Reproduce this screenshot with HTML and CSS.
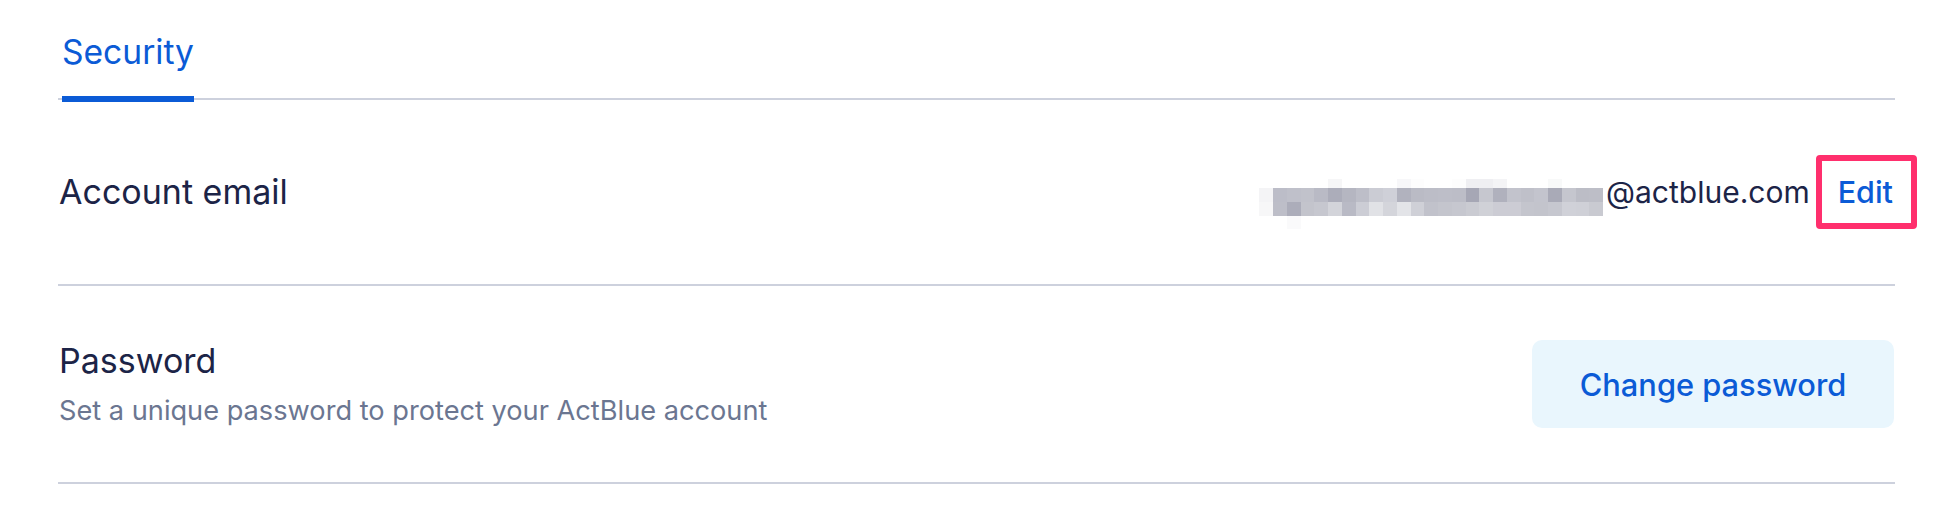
FILE: index.html
```html
<!DOCTYPE html>
<html lang="en">
<head>
<meta charset="utf-8">
<title>Security</title>
<link rel="stylesheet" href="styles.css">
</head>
<body>
<main class="page">
  <nav class="tabs">
    <a class="tab tab-active" href="#">Security</a>
  </nav>

  <section class="row row-email">
    <div class="row-title">Account email</div>
    <div class="row-actions">
      <span class="email">
        <span class="mosaic" aria-hidden="true">
          <i style="background:#fff"></i><i style="background:#fff"></i><i style="background:#fff"></i><i style="background:#fff"></i><i style="background:#fff"></i><i style="background:#f6f6f7"></i><i style="background:#fff"></i><i style="background:#fff"></i><i style="background:#fff"></i><i style="background:#fff"></i><i style="background:#f7f7f9"></i><i style="background:#fdfdfd"></i><i style="background:#fff"></i><i style="background:#fff"></i><i style="background:#fdfdfd"></i><i style="background:#efeff2"></i><i style="background:#efeff2"></i><i style="background:#f4f4f6"></i><i style="background:#fff"></i><i style="background:#fff"></i><i style="background:#fff"></i><i style="background:#f8f9f9"></i><i style="background:#fff"></i><i style="background:#fff"></i><i style="background:#fff"></i>
          <i style="background:#f4f4f6"></i><i style="background:#bcbdc8"></i><i style="background:#bfc0ca"></i><i style="background:#c1c2cb"></i><i style="background:#b9bac5"></i><i style="background:#acadba"></i><i style="background:#b5b6c1"></i><i style="background:#bdbec8"></i><i style="background:#cbccd4"></i><i style="background:#cfd0d8"></i><i style="background:#b1b2be"></i><i style="background:#babbc5"></i><i style="background:#bcbdc7"></i><i style="background:#bdbec8"></i><i style="background:#bcbdc7"></i><i style="background:#a6a7b5"></i><i style="background:#c6c7cf"></i><i style="background:#b0b1bd"></i><i style="background:#c2c3cc"></i><i style="background:#bfc0c9"></i><i style="background:#c3c4cd"></i><i style="background:#a9aab7"></i><i style="background:#c5c6ce"></i><i style="background:#bcbdc6"></i><i style="background:#bdbec7"></i>
          <i style="background:#f7f7f8"></i><i style="background:#bdbec8"></i><i style="background:#acadba"></i><i style="background:#c3c4cc"></i><i style="background:#c6c7cf"></i><i style="background:#d3d4da"></i><i style="background:#b9bac5"></i><i style="background:#cccdd5"></i><i style="background:#e1e2e6"></i><i style="background:#d4d5db"></i><i style="background:#e3e4e8"></i><i style="background:#cfd0d7"></i><i style="background:#c1c2cb"></i><i style="background:#c4c5cd"></i><i style="background:#c6c7cf"></i><i style="background:#cacbd2"></i><i style="background:#d0d1d7"></i><i style="background:#ccccd4"></i><i style="background:#ccccd4"></i><i style="background:#c4c5cd"></i><i style="background:#c3c4cc"></i><i style="background:#c6c7cf"></i><i style="background:#d0d1d8"></i><i style="background:#cfd0d7"></i><i style="background:#c9cad1"></i>
          <i style="background:#fff"></i><i style="background:#fff"></i><i style="background:#fafafb"></i><i style="background:#fff"></i><i style="background:#fff"></i><i style="background:#fff"></i><i style="background:#fff"></i><i style="background:#fff"></i><i style="background:#fff"></i><i style="background:#fff"></i><i style="background:#fff"></i><i style="background:#fff"></i><i style="background:#fff"></i><i style="background:#fff"></i><i style="background:#fff"></i><i style="background:#fff"></i><i style="background:#fff"></i><i style="background:#fff"></i><i style="background:#fff"></i><i style="background:#fff"></i><i style="background:#fff"></i><i style="background:#fff"></i><i style="background:#fff"></i><i style="background:#fff"></i><i style="background:#fff"></i>
        </span><span class="email-domain">@actblue.com</span>
      </span>
      <a class="edit-link" href="#">Edit</a>
    </div>
  </section>

  <section class="row row-password">
    <div class="row-text">
      <div class="row-title">Password</div>
      <div class="row-sub">Set a unique password to protect your ActBlue account</div>
    </div>
    <button class="btn-soft" type="button">Change password</button>
  </section>
</main>
</body>
</html>
```

FILE: styles.css
```css
* {
  box-sizing: border-box;
}

html, body {
  margin: 0;
  padding: 0;
  background: #ffffff;
}

body {
  font-family: Inter, "Noto Sans", "Liberation Sans", sans-serif;
  color: #1c2447;
}

.page {
  width: 1837px;
  margin-left: 58px;
}

.tabs {
  display: flex;
  padding-top: 28px;
  border-bottom: 2px solid #cdd1dd;
}

.tab {
  display: block;
  margin-left: 4px;
  margin-bottom: -4px;
  padding-bottom: 20px;
  font-size: 33.6px;
  line-height: 48px;
  color: #0b5bd6;
  text-decoration: none;
  border-bottom: 6px solid #0b5bd6;
}

.row {
  display: flex;
  align-items: center;
  justify-content: space-between;
  border-bottom: 2px solid #cdd1dd;
}

.row-email {
  height: 186px;
}

.row-password {
  height: 198px;
}

.row-title {
  font-size: 34px;
  line-height: 44px;
  color: #1c2447;
  margin-left: 1px;
}

.row-sub {
  font-size: 27.2px;
  line-height: 36px;
  color: #6b7691;
  margin-top: 10px;
  margin-left: 1px;
}

.row-actions {
  display: flex;
  align-items: center;
}

.email {
  display: flex;
  align-items: center;
  font-size: 30px;
  line-height: 40px;
  color: #1c2447;
}

.mosaic {
  display: grid;
  grid-template-columns: repeat(25, 13.76px);
  grid-template-rows: 9px 14px 14px 13px;
  margin-top: 24px;
  margin-right: 3px;
}

.mosaic i {
  display: block;
}

.edit-link {
  position: relative;
  margin-left: 28px;
  margin-right: 2px;
  font-size: 30.5px;
  line-height: 40px;
  font-weight: 500;
  color: #0b5bd6;
  text-decoration: none;
}

.edit-link::after {
  content: "";
  position: absolute;
  left: -22px;
  right: -24px;
  top: -17px;
  bottom: -17px;
  border: 6px solid #ff2f6d;
  border-radius: 4px;
}

.btn-soft {
  width: 362px;
  height: 88px;
  margin-right: 1px;
  border: 0;
  border-radius: 10px;
  background: #e9f6fd;
  color: #0b5bd6;
  font-family: Inter, "Noto Sans", "Liberation Sans", sans-serif;
  font-size: 30.8px;
  font-weight: 500;
  cursor: pointer;
}
```
